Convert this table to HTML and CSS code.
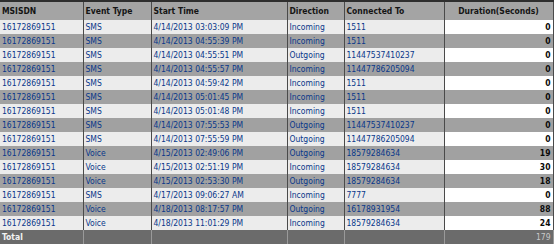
FILE: index.html
```html
<!DOCTYPE html>
<html>
<head>
<meta charset="utf-8">
<link rel="stylesheet" href="styles.css">
</head>
<body>
<table class="calls">
  <colgroup>
    <col class="c1"><col class="c2"><col class="c3"><col class="c4"><col class="c5"><col class="c6">
  </colgroup>
  <thead>
    <tr class="head">
      <th>MSISDN</th><th>Event Type</th><th>Start Time</th><th>Direction</th><th>Connected To</th><th class="dur">Duration(Seconds)</th>
    </tr>
  </thead>
  <tbody>
    <tr class="light"><td>16172869151</td><td>SMS</td><td>4/14/2013 03:03:09 PM</td><td>Incoming</td><td>1511</td><td class="num">0</td></tr>
    <tr class="dark"><td>16172869151</td><td>SMS</td><td>4/14/2013 04:55:39 PM</td><td>Incoming</td><td>1511</td><td class="num">0</td></tr>
    <tr class="light"><td>16172869151</td><td>SMS</td><td>4/14/2013 04:55:51 PM</td><td>Outgoing</td><td>11447537410237</td><td class="num">0</td></tr>
    <tr class="dark"><td>16172869151</td><td>SMS</td><td>4/14/2013 04:55:57 PM</td><td>Incoming</td><td>11447786205094</td><td class="num">0</td></tr>
    <tr class="light"><td>16172869151</td><td>SMS</td><td>4/14/2013 04:59:42 PM</td><td>Incoming</td><td>1511</td><td class="num">0</td></tr>
    <tr class="dark"><td>16172869151</td><td>SMS</td><td>4/14/2013 05:01:45 PM</td><td>Incoming</td><td>1511</td><td class="num">0</td></tr>
    <tr class="light"><td>16172869151</td><td>SMS</td><td>4/14/2013 05:01:48 PM</td><td>Incoming</td><td>1511</td><td class="num">0</td></tr>
    <tr class="dark"><td>16172869151</td><td>SMS</td><td>4/14/2013 07:55:53 PM</td><td>Outgoing</td><td>11447537410237</td><td class="num">0</td></tr>
    <tr class="light"><td>16172869151</td><td>SMS</td><td>4/14/2013 07:55:59 PM</td><td>Outgoing</td><td>11447786205094</td><td class="num">0</td></tr>
    <tr class="dark"><td>16172869151</td><td>Voice</td><td>4/15/2013 02:49:06 PM</td><td>Outgoing</td><td>18579284634</td><td class="num">19</td></tr>
    <tr class="light"><td>16172869151</td><td>Voice</td><td>4/15/2013 02:51:19 PM</td><td>Incoming</td><td>18579284634</td><td class="num">30</td></tr>
    <tr class="dark"><td>16172869151</td><td>Voice</td><td>4/15/2013 02:53:30 PM</td><td>Outgoing</td><td>18579284634</td><td class="num">18</td></tr>
    <tr class="light"><td>16172869151</td><td>SMS</td><td>4/17/2013 09:06:27 AM</td><td>Incoming</td><td>7777</td><td class="num">0</td></tr>
    <tr class="dark"><td>16172869151</td><td>Voice</td><td>4/18/2013 08:17:57 PM</td><td>Outgoing</td><td>16178931954</td><td class="num">88</td></tr>
    <tr class="light"><td>16172869151</td><td>Voice</td><td>4/18/2013 11:01:29 PM</td><td>Incoming</td><td>18579284634</td><td class="num">24</td></tr>
  </tbody>
  <tfoot>
    <tr class="total"><td class="label">Total</td><td></td><td></td><td></td><td></td><td class="num">179</td></tr>
  </tfoot>
</table>
</body>
</html>
```
FILE: styles.css
```css
html, body {
  margin: 0;
  padding: 0;
  background: #ffffff;
}

.calls {
  border-collapse: collapse;
  table-layout: fixed;
  width: 553px;
  font-family: "DejaVu Sans Condensed", "DejaVu Sans", "Liberation Sans", sans-serif;
  font-size: 8.5px;
  border-top: 2px solid #2e2e2e;
}

.c1 { width: 83px; }
.c2 { width: 68px; }
.c3 { width: 136px; }
.c4 { width: 57px; }
.c5 { width: 100px; }
.c6 { width: 109px; }

.calls th,
.calls td {
  padding: 0 2px;
  border-right: 1px solid #4a4a4a;
  white-space: nowrap;
  overflow: hidden;
  text-align: left;
  vertical-align: middle;
}

.head th {
  height: 18px;
  background: #a4a4a4;
  color: #151515;
  font-weight: bold;
}

.head th.dur {
  text-align: center;
}

tbody td {
  height: 14px;
  line-height: 12px;
  color: #08378a;
}

tbody tr.light td {
  background: #ececec;
}

tbody tr.dark td {
  background: #a1a1a1;
}

tbody tr.light td.num {
  background: #ffffff;
}

td.num {
  text-align: right;
  font-weight: bold;
  color: #0a0a0a;
}

.total td {
  height: 14px;
  background: #6b6b6b;
  color: #f0f0f0;
  border-right-color: #9a9a9a;
}

.total td.label {
  font-weight: bold;
  color: #f2f2f2;
}

.total td.num {
  color: #c8c8c8;
  font-weight: normal;
}
```
